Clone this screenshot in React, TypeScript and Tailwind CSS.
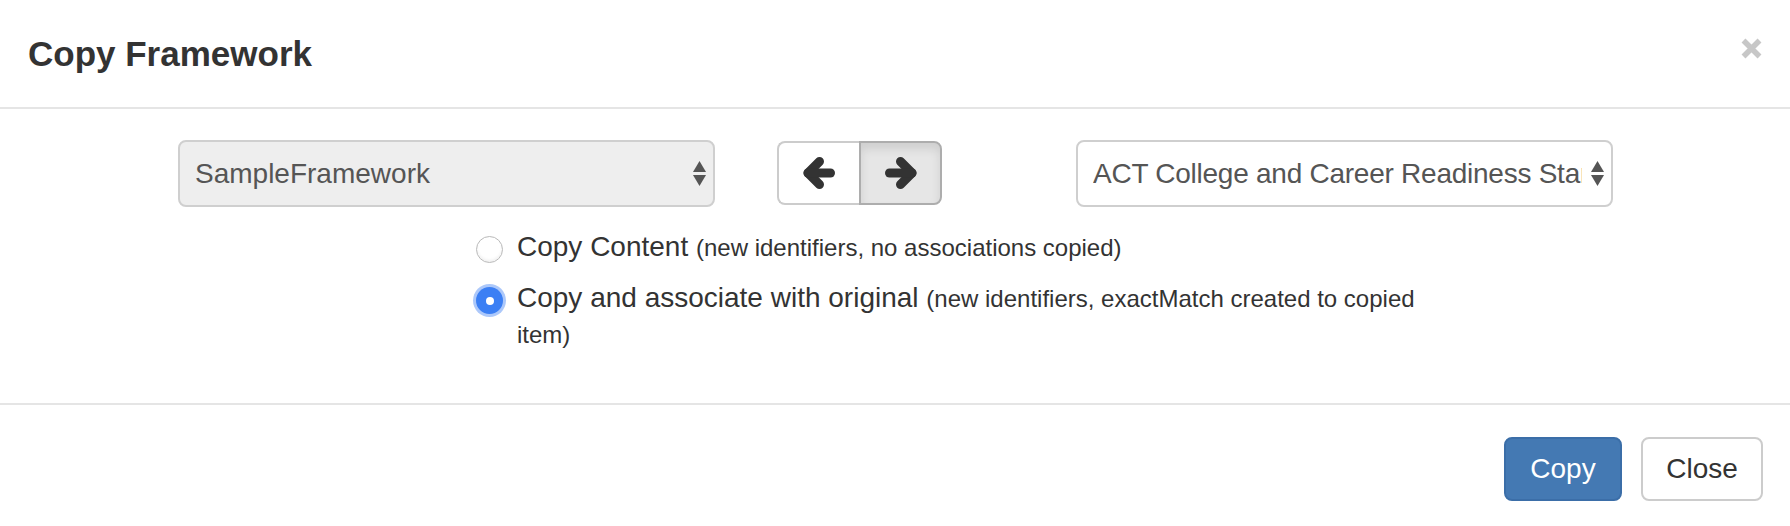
import React from 'react';

function UpDown() {
  return (
    <svg width="13" height="25" viewBox="0 0 13 25" className="shrink-0">
      <path d="M6.5 0 L13 11 L0 11 Z" fill="#555" />
      <path d="M0 14 L13 14 L6.5 25 Z" fill="#555" />
    </svg>
  );
}

function Arrow({ dir }: { dir: 'left' | 'right' }) {
  return (
    <svg
      width="32"
      height="32"
      viewBox="0 0 32 32"
      className={dir === 'right' ? 'rotate-180' : ''}
    >
      <polyline
        points="16.5,4.5 5,16 16.5,27.5"
        fill="none"
        stroke="#333"
        strokeWidth="9"
        strokeLinecap="round"
        strokeLinejoin="round"
      />
      <line x1="5" y1="16" x2="27.5" y2="16" stroke="#333" strokeWidth="9" strokeLinecap="round" />
    </svg>
  );
}

function Radio({ checked }: { checked?: boolean }) {
  if (checked) {
    return (
      <span className="mt-[7px] flex h-[27px] w-[27px] shrink-0 items-center justify-center rounded-full bg-[#3b7ff4] shadow-[0_0_0_3px_rgba(90,145,245,0.5)]">
        <span className="h-[8px] w-[8px] rounded-full bg-white" />
      </span>
    );
  }
  return (
    <span className="mt-[7px] block h-[27px] w-[27px] shrink-0 rounded-full border-[1.5px] border-[#b9b9b9] bg-white shadow-[inset_0_-2px_3px_rgba(0,0,0,0.06)]" />
  );
}

export default function App() {
  return (
    <div className="h-[526px] w-[1790px] bg-white font-['Liberation_Sans',Arial,sans-serif] text-[#333]">
      {/* header */}
      <div className="flex h-[109px] justify-between border-b-2 border-[#e5e5e5]">
        <h4 className="pl-[28px] pt-[34px] text-[35px] leading-[40px] font-bold">Copy Framework</h4>
        <div className="pr-[28px] pt-[38px]">
          <svg width="21" height="21" viewBox="0 0 21 21">
            <path d="M2.5 2.5 L18.5 18.5 M18.5 2.5 L2.5 18.5" stroke="#c7c7c7" strokeWidth="5.5" />
          </svg>
        </div>
      </div>

      {/* body */}
      <div className="h-[296px] border-b-2 border-[#e5e5e5] pt-[31px]">
        <div className="flex items-start pl-[178px] text-[28px] text-[#555]">
          <div className="flex h-[67px] w-[537px] items-center rounded-[8px] border-2 border-[#cfcfcf] bg-[#eeeeee] pl-[15px] pr-[7px]">
            <span className="flex-1 whitespace-nowrap">SampleFramework</span>
            <UpDown />
          </div>

          <div className="ml-[62px] mt-[1px] flex h-[64px]">
            <div className="flex w-[82px] items-center justify-center rounded-l-[8px] border-2 border-r-0 border-[#cccccc] bg-white">
              <Arrow dir="left" />
            </div>
            <div className="flex w-[83px] items-center justify-center rounded-r-[8px] border-2 border-[#adadad] bg-[#e6e6e6] shadow-[inset_0_6px_10px_rgba(0,0,0,0.1)]">
              <Arrow dir="right" />
            </div>
          </div>

          <div className="ml-[134px] flex h-[67px] w-[537px] items-center rounded-[8px] border-2 border-[#cfcfcf] bg-white pl-[15px] pr-[7px]">
            <span className="mr-[9px] flex-1 overflow-hidden whitespace-nowrap tracking-[-0.25px]">
              ACT College and Career Readiness Standards
            </span>
            <UpDown />
          </div>
        </div>

        <div className="ml-[476px] mt-[22px] w-[975px] text-[28px] leading-[35px]">
          <label className="flex items-start">
            <Radio />
            <span className="ml-[14px]">
              Copy Content <small className="text-[24px] leading-[28px]">(new identifiers, no associations copied)</small>
            </span>
          </label>
          <label className="mt-[16px] flex items-start">
            <Radio checked />
            <span className="ml-[14px] leading-[36px]">
              Copy and associate with original{' '}
              <small className="text-[24px] leading-[28px]">(new identifiers, exactMatch created to copied item)</small>
            </span>
          </label>
        </div>
      </div>

      {/* footer */}
      <div className="flex justify-end gap-[19px] pr-[27px] pt-[32px] text-[28px]">
        <button className="flex h-[64px] w-[118px] items-center justify-center rounded-[8px] border-2 border-[#3b6ea8] bg-[#4479b3] text-white">
          Copy
        </button>
        <button className="flex h-[64px] w-[122px] items-center justify-center rounded-[8px] border-2 border-[#cccccc] bg-white text-[#333]">
          Close
        </button>
      </div>
    </div>
  );
}
